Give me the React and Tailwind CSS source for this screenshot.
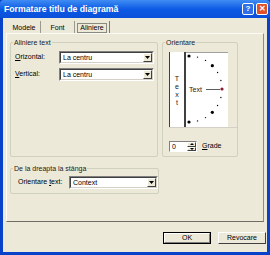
import React from "react";

const F = { fontFamily: '"Liberation Sans", Arial, sans-serif' };

function Combo({ value, w }) {
  return (
    <div className={`flex h-[13px] ${w} border border-t-[#808080] border-l-[#808080] border-b-white border-r-white`}>
      <div className="flex flex-1 border border-t-[#404040] border-l-[#404040] border-b-[#d4d0c8] border-r-[#d4d0c8] bg-white">
        <div className="flex-1 pl-[2px] text-[7px] leading-[9px] text-black">{value}</div>
        <div className="flex w-[9px] items-center justify-center border border-t-white border-l-white border-b-[#404040] border-r-[#404040] bg-[#ece9d8]">
          <svg width="5" height="3" viewBox="0 0 5 3"><path d="M0 0h5L2.5 3z" fill="#000" /></svg>
        </div>
      </div>
    </div>
  );
}

function Group({ title, className, children }) {
  return (
    <div className={`relative rounded-[2px] border border-[#d0d0bf] ${className}`}>
      <div className="absolute left-[2px] top-[-5px] bg-[#ece9d8] px-[1px] text-[7px] leading-[9px] text-[#1b1b1b]">{title}</div>
      {children}
    </div>
  );
}

function Dial() {
  const cx = 3, cy = 36, r = 33;
  const dots = [];
  for (let a = -90; a <= 90; a += 15) {
    const rad = (a * Math.PI) / 180;
    const x = cx + r * Math.cos(rad);
    const y = cy + r * Math.sin(rad);
    const big = a % 45 === 0;
    dots.push(
      <circle key={a} cx={x} cy={y} r={big ? 1.6 : 0.7} fill={a === 0 ? "#8b1a2b" : "#000"} />
    );
  }
  return (
    <svg width="42" height="74" viewBox="0 0 42 74">
      {dots}
      <text x="3" y="39" fontSize="7" fontFamily="Liberation Sans, Arial, sans-serif" fill="#222">Text</text>
      <line x1="20" y1="36.5" x2="34" y2="36.5" stroke="#333" strokeWidth="0.8" />
    </svg>
  );
}

export default function App() {
  return (
    <div className="flex h-[255px] w-[270px] flex-col bg-[#0842c9]" style={F}>
      {/* title bar */}
      <div className="flex h-[18px] items-center rounded-t-[4px] bg-gradient-to-b from-[#3f8cf3] via-[#0d5ae6] to-[#0a4fd8] pl-[4px] pr-[2px]">
        <div className="flex-1 text-[8.7px] font-bold leading-[10px] text-white">Formatare titlu de diagramă</div>
        <div className="flex gap-[2px]">
          <div className="flex h-[12px] w-[12px] items-center justify-center rounded-[2px] border border-white bg-[#2f6fe8] text-[8px] font-bold leading-none text-white">?</div>
          <div className="flex h-[12px] w-[12px] items-center justify-center rounded-[2px] border border-white bg-[#e0502a] text-[8px] font-bold leading-none text-white">✕</div>
        </div>
      </div>
      {/* body */}
      <div className="mx-[3px] mb-[3px] flex flex-1 flex-col bg-[#ece9d8]">
        {/* tabs */}
        <div className="ml-[5px] mt-[3px] flex h-[12px] items-end">
          <div className="flex h-[12px] w-[33px] items-center justify-center border-r border-[#9a9a90] pt-[2px] text-[7px] text-black">Modele</div>
          <div className="flex h-[12px] w-[34px] items-center justify-center border-r border-[#9a9a90] pt-[2px] text-[7px] text-black">Font</div>
          <div className="flex h-[12px] w-[35px] items-center justify-center border-r border-[#7a7a70] pt-[1px] text-[7px] text-black">
            <span className="border border-[#8a8a80] px-[2px] leading-[8px]">Aliniere</span>
          </div>
        </div>
        {/* panel */}
        <div className="mx-[3px] flex h-[189px] flex-col border border-t-[#fbfbf8] border-l-[#fbfbf8] border-b-[#6d6d66] border-r-[#8d8d86] px-[3px] pt-[8px]">
          <div className="flex gap-[4px]">
            <Group title="Aliniere text" className="h-[115px] w-[148px]">
              <div className="flex flex-col gap-[4px] pl-[4px] pt-[8px]">
                <div className="flex items-center">
                  <div className="w-[44px] text-[7px] text-black"><span className="underline">O</span>rizontal:</div>
                  <Combo value="La centru" w="w-[95px]" />
                </div>
                <div className="flex items-center">
                  <div className="w-[44px] text-[7px] text-black"><span className="underline">V</span>ertical:</div>
                  <Combo value="La centru" w="w-[95px]" />
                </div>
              </div>
            </Group>
            <Group title="Orientare" className="h-[115px] w-[76px]">
              <div className="flex flex-col pl-[6px] pt-[9px]">
                <div className="flex h-[76px] border-b border-[#d4d0c8]">
                  <div className="flex w-[17px] flex-col items-center justify-center border-l border-r-2 border-l-[#404040] border-r-[#404040] bg-white pt-[2px] text-[7px] leading-[8px] text-[#222]">
                    <span>T</span><span>e</span><span>x</span><span>t</span>
                  </div>
                  <div className="border-t border-[#a0a0a0] bg-white">
                    <Dial />
                  </div>
                </div>
                <div className="mt-[13px] flex items-center gap-[5px]">
                  <div className="flex h-[11px] w-[28px] border border-t-[#808080] border-l-[#808080] border-b-white border-r-white bg-white">
                    <div className="flex-1 pl-[2px] text-[7px] leading-[9px] text-black">0</div>
                    <div className="flex w-[9px] flex-col">
                      <div className="flex flex-1 items-center justify-center border border-t-white border-l-white border-b-[#404040] border-r-[#404040] bg-[#ece9d8]">
                        <svg width="4" height="2" viewBox="0 0 4 2"><path d="M0 2h4L2 0z" fill="#000" /></svg>
                      </div>
                      <div className="flex flex-1 items-center justify-center border border-t-white border-l-white border-b-[#404040] border-r-[#404040] bg-[#ece9d8]">
                        <svg width="4" height="2" viewBox="0 0 4 2"><path d="M0 0h4L2 2z" fill="#000" /></svg>
                      </div>
                    </div>
                  </div>
                  <div className="text-[7px] text-black"><span className="underline">G</span>rade</div>
                </div>
              </div>
            </Group>
          </div>
          <Group title="De la dreapta la stânga" className="mt-[11px] h-[26px] w-[149px]">
            <div className="flex items-center pl-[7px] pt-[7px]">
              <div className="w-[51px] text-[7px] text-black">Orientare <span className="underline">t</span>ext:</div>
              <Combo value="Context" w="w-[89px]" />
            </div>
          </Group>
        </div>
        {/* buttons */}
        <div className="mr-[1px] mt-[10px] flex justify-end gap-[7px]">
          <div className="flex h-[12px] w-[48px] items-center justify-center border border-black bg-[#ece9d8]">
            <div className="flex h-full w-full items-center justify-center border border-t-white border-l-white border-b-[#808080] border-r-[#808080] text-[7px] text-black">OK</div>
          </div>
          <div className="flex h-[12px] w-[48px] items-center justify-center border border-t-white border-l-white border-b-[#404040] border-r-[#404040] bg-[#ece9d8] text-[7px] text-black">Revocare</div>
        </div>
      </div>
    </div>
  );
}
